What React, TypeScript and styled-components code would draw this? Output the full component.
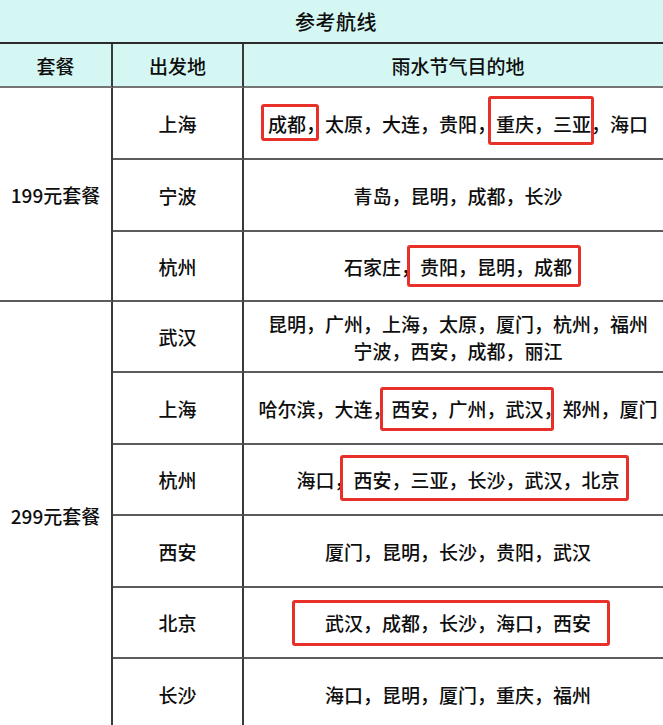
import React from "react";
import styled, { createGlobalStyle } from "styled-components";

const Global = createGlobalStyle`
  html, body { margin: 0; padding: 0; background: #ffffff; overflow: hidden; }
  body { font-family: "Noto Sans CJK SC", "Noto Sans", sans-serif; color: #0e0e0e; }
`;

const Sheet = styled.div`
  width: 672px;
`;

const Title = styled.div`
  height: 42px;
  border-bottom: 2px solid #2a2a2a;
  background: #d5f7f4;
  display: flex;
  align-items: center;
  justify-content: center;
  font-size: 20px;
  font-weight: 500;
  letter-spacing: 0.5px;
`;

const Grid = styled.div`
  display: grid;
  grid-template-columns: 113px 131px 1fr;
  grid-template-rows: 44px 72px 72px 70px 71px 72px 71px 72px 71px 72px;
`;

const Cell = styled.div<{ $last?: boolean }>`
  box-sizing: border-box;
  display: flex;
  align-items: center;
  justify-content: center;
  text-align: center;
  font-size: 19px;
  font-weight: 500;
  line-height: 27px;
  border-bottom: 2px solid #5c5c5c;
  border-right: ${(p) => (p.$last ? "none" : "2px solid #3a3a3a")};
`;

const HeadCell = styled(Cell)`
  background: #d5f7f4;
  border-bottom-color: #747474;
`;

const GroupCell = styled(Cell)<{ $span: number }>`
  grid-column: 1;
  grid-row: span ${(p) => p.$span};
`;

const DestCell = styled(Cell)`
  position: relative;
  flex-direction: column;
`;

const Highlight = styled.span<{ $x: number; $y: number; $w: number; $h: number }>`
  position: absolute;
  left: ${(p) => p.$x}px;
  top: ${(p) => p.$y}px;
  width: ${(p) => p.$w}px;
  height: ${(p) => p.$h}px;
  box-sizing: border-box;
  border: 3px solid #e8302a;
  border-radius: 3px;
  pointer-events: none;
`;

type Box = { x: number; y: number; w: number; h: number };
type Row = { from: string; lines: string[]; boxes?: Box[] };
type Group = { name: string; rows: Row[] };

const groups: Group[] = [
  {
    name: "199元套餐",
    rows: [
      {
        from: "上海",
        lines: ["成都，太原，大连，贵阳，重庆，三亚，海口"],
        boxes: [
          { x: 17, y: 16, w: 58, h: 37 },
          { x: 244, y: 8, w: 106, h: 49 },
        ],
      },
      { from: "宁波", lines: ["青岛，昆明，成都，长沙"] },
      {
        from: "杭州",
        lines: ["石家庄，贵阳，昆明，成都"],
        boxes: [{ x: 163, y: 13, w: 174, h: 42 }],
      },
    ],
  },
  {
    name: "299元套餐",
    rows: [
      {
        from: "武汉",
        lines: ["昆明，广州，上海，太原，厦门，杭州，福州", "宁波，西安，成都，丽江"],
      },
      {
        from: "上海",
        lines: ["哈尔滨，大连，西安，广州，武汉，郑州，厦门"],
        boxes: [{ x: 136, y: 14, w: 174, h: 44 }],
      },
      {
        from: "杭州",
        lines: ["海口，西安，三亚，长沙，武汉，北京"],
        boxes: [{ x: 96, y: 10, w: 289, h: 46 }],
      },
      { from: "西安", lines: ["厦门，昆明，长沙，贵阳，武汉"] },
      {
        from: "北京",
        lines: ["武汉，成都，长沙，海口，西安"],
        boxes: [{ x: 48, y: 12, w: 318, h: 46 }],
      },
      { from: "长沙", lines: ["海口，昆明，厦门，重庆，福州"] },
    ],
  },
];

export default function App() {
  return (
    <Sheet>
      <Global />
      <Title>参考航线</Title>
      <Grid>
        <HeadCell>套餐</HeadCell>
        <HeadCell>出发地</HeadCell>
        <HeadCell $last>雨水节气目的地</HeadCell>
        {groups.map((g) => (
          <React.Fragment key={g.name}>
            <GroupCell $span={g.rows.length}>{g.name}</GroupCell>
            {g.rows.map((r, i) => (
              <React.Fragment key={g.name + i}>
                <Cell>{r.from}</Cell>
                <DestCell $last>
                  {r.lines.map((l) => (
                    <div key={l}>{l}</div>
                  ))}
                  {r.boxes?.map((b, j) => (
                    <Highlight key={j} $x={b.x} $y={b.y} $w={b.w} $h={b.h} />
                  ))}
                </DestCell>
              </React.Fragment>
            ))}
          </React.Fragment>
        ))}
      </Grid>
    </Sheet>
  );
}
